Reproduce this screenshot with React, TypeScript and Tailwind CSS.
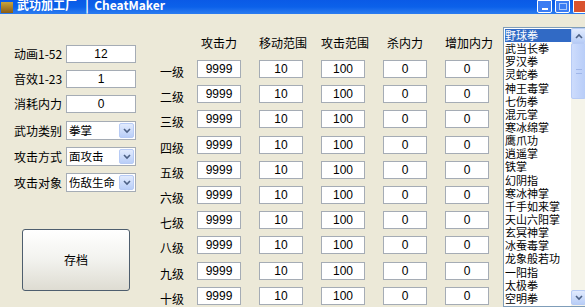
const cjk = '"Noto Sans CJK SC", "Liberation Sans", sans-serif'

const fields = [
  { label: '动画1-52', value: '12' },
  { label: '音效1-23', value: '1' },
  { label: '消耗内力', value: '0' },
]

const selects = [
  { label: '武功类别', value: '拳掌' },
  { label: '攻击方式', value: '面攻击' },
  { label: '攻击对象', value: '伤敌生命' },
]

const headers = ['攻击力', '移动范围', '攻击范围', '杀内力', '增加内力']
const levels = ['一级', '二级', '三级', '四级', '五级', '六级', '七级', '八级', '九级', '十级']
const levelValues = ['9999', '10', '100', '0', '0']

const skills = [
  '野球拳', '武当长拳', '罗汉拳', '灵蛇拳', '神王毒掌', '七伤拳', '混元掌', '寒冰绵掌', '鹰爪功', '逍遥掌', '铁掌',
  '幻阴指', '寒冰神掌', '千手如来掌', '天山六阳掌', '玄冥神掌', '冰蚕毒掌', '龙象般若功', '一阳指', '太极拳', '空明拳',
]

function TextBox({ value, className }: { value: string; className: string }) {
  return (
    <div className={`flex h-[18px] shrink-0 items-center justify-center border border-[#a5acb5] bg-white text-[12px] text-black ${className}`}>
      <span style={{ fontFamily: '"Liberation Sans", sans-serif' }}>{value}</span>
    </div>
  )
}

function Chevron({ up }: { up?: boolean }) {
  return (
    <svg width="8" height="6" viewBox="0 0 8 6">
      <path d={up ? 'M1 5 L4 2 L7 5' : 'M1 1 L4 4 L7 1'} fill="none" stroke="#4d6185" strokeWidth="1.6" />
    </svg>
  )
}

function ComboBox({ value }: { value: string }) {
  return (
    <div className="flex h-[19px] w-[70px] items-center border border-[#a5acb5] bg-white pl-[2px]">
      <span className="flex-1 whitespace-nowrap text-[11.5px] leading-none text-black">{value}</span>
      <div className="m-px flex h-[15px] w-[15px] shrink-0 items-center justify-center rounded-[2px] border border-[#b7cbf5] bg-gradient-to-b from-[#e2ebfd] to-[#b9cef7]">
        <Chevron />
      </div>
    </div>
  )
}

export default function App() {
  return (
    <div className="h-[307px] w-[585px] overflow-hidden bg-[#ece9d8]" style={{ fontFamily: cjk }}>
      <div className="flex h-[14px] items-end overflow-hidden bg-gradient-to-b from-[#0a5ae6] via-[#0b61ea] to-[#2b7cf0]">
        <div className="-mb-[1px] flex h-[20px] flex-1 items-center">
          <div className="ml-[1px] mr-[4px] mt-[4px] h-[11px] w-[12px] bg-gradient-to-b from-[#c9a43c] to-[#8a5c14]" />
          <span className="whitespace-pre text-[12px] font-bold leading-none text-white">武功加工厂   |  CheatMaker</span>
        </div>
        <div className="flex items-end gap-[3px] pb-[1px]">
          <div className="flex h-[13px] w-[15px] items-end justify-center rounded-b-[2px] border border-white bg-[#3b7cf2] pb-[2px]">
            <div className="h-[2px] w-[6px] bg-white" />
          </div>
          <div className="flex h-[13px] w-[15px] items-center justify-center rounded-b-[2px] border border-white bg-[#3b7cf2]">
            <div className="h-[7px] w-[8px] border border-[#a9c8fb]" />
          </div>
          <div className="h-[13px] w-[12px] rounded-bl-[2px] border border-r-0 border-white bg-[#d9522e]" />
        </div>
      </div>

      <div className="flex">
        <div className="flex w-[150px] shrink-0 flex-col pl-[14px] pt-[31px] text-[12px] text-black">
          <div className="flex flex-col gap-[7px]">
            {fields.map((field) => (
              <div className="flex items-center" key={field.label}>
                <span className="w-[52px] whitespace-nowrap">{field.label}</span>
                <TextBox className="w-[70px]" value={field.value} />
              </div>
            ))}
          </div>
          <div className="mt-[8px] flex flex-col gap-[7px]">
            {selects.map((item) => (
              <div className="flex items-center" key={item.label}>
                <span className="w-[52px] whitespace-nowrap">{item.label}</span>
                <ComboBox value={item.value} />
              </div>
            ))}
          </div>
          <button className="ml-[8px] mt-[37px] flex h-[62px] w-[108px] items-center justify-center rounded-[3px] border border-[#4e5e6e] bg-gradient-to-b from-white via-[#f2f2ee] to-[#dedcd2] text-[12px] text-black">
            存档
          </button>
        </div>

        <div className="flex w-[353px] shrink-0 flex-col pl-[10px] pt-[20px] text-[12px] text-black">
          <div className="flex h-[26px] items-start gap-[18px] pl-[37px]">
            {headers.map((header) => (
              <span className="w-[44px] shrink-0 whitespace-nowrap text-center" key={header}>
                {header}
              </span>
            ))}
          </div>
          {levels.map((level) => (
            <div className="flex h-[25.2px] items-start" key={level}>
              <span className="mt-[3px] w-[37px] shrink-0">{level}</span>
              <div className="flex gap-[18px]">
                {levelValues.map((value, index) => (
                  <TextBox className="w-[44px]" key={index} value={value} />
                ))}
              </div>
            </div>
          ))}
        </div>

        <div className="mt-[13px] flex h-[280px] w-[84px] shrink-0 border border-[#7f9db9] bg-white">
          <div className="flex flex-1 flex-col pl-px pt-px text-[11px] text-black">
            {skills.map((skill, index) => (
              <span
                className={`block h-[13.15px] whitespace-nowrap leading-[13.15px] ${index === 0 ? 'bg-[#316ac5] text-white' : ''}`}
                key={skill}
              >
                {skill}
              </span>
            ))}
          </div>
          <div className="flex w-[15px] flex-col bg-[#f5f4ea]">
            <div className="flex h-[15px] items-center justify-center rounded-[2px] border border-[#b7cbf5] bg-gradient-to-b from-[#e2ebfd] to-[#b9cef7]">
              <Chevron up />
            </div>
            <div className="flex h-[56px] items-center justify-center rounded-[2px] border border-[#b7cbf5] bg-gradient-to-r from-[#cddcfc] to-[#b8cdf8]">
              <div className="h-[5px] w-[6px] border-y border-[#9fb6e9]" />
            </div>
            <div className="flex-1" />
            <div className="mb-px flex h-[15px] items-center justify-center rounded-[2px] border border-[#b7cbf5] bg-gradient-to-b from-[#e2ebfd] to-[#b9cef7]">
              <Chevron />
            </div>
          </div>
        </div>
      </div>
    </div>
  )
}
